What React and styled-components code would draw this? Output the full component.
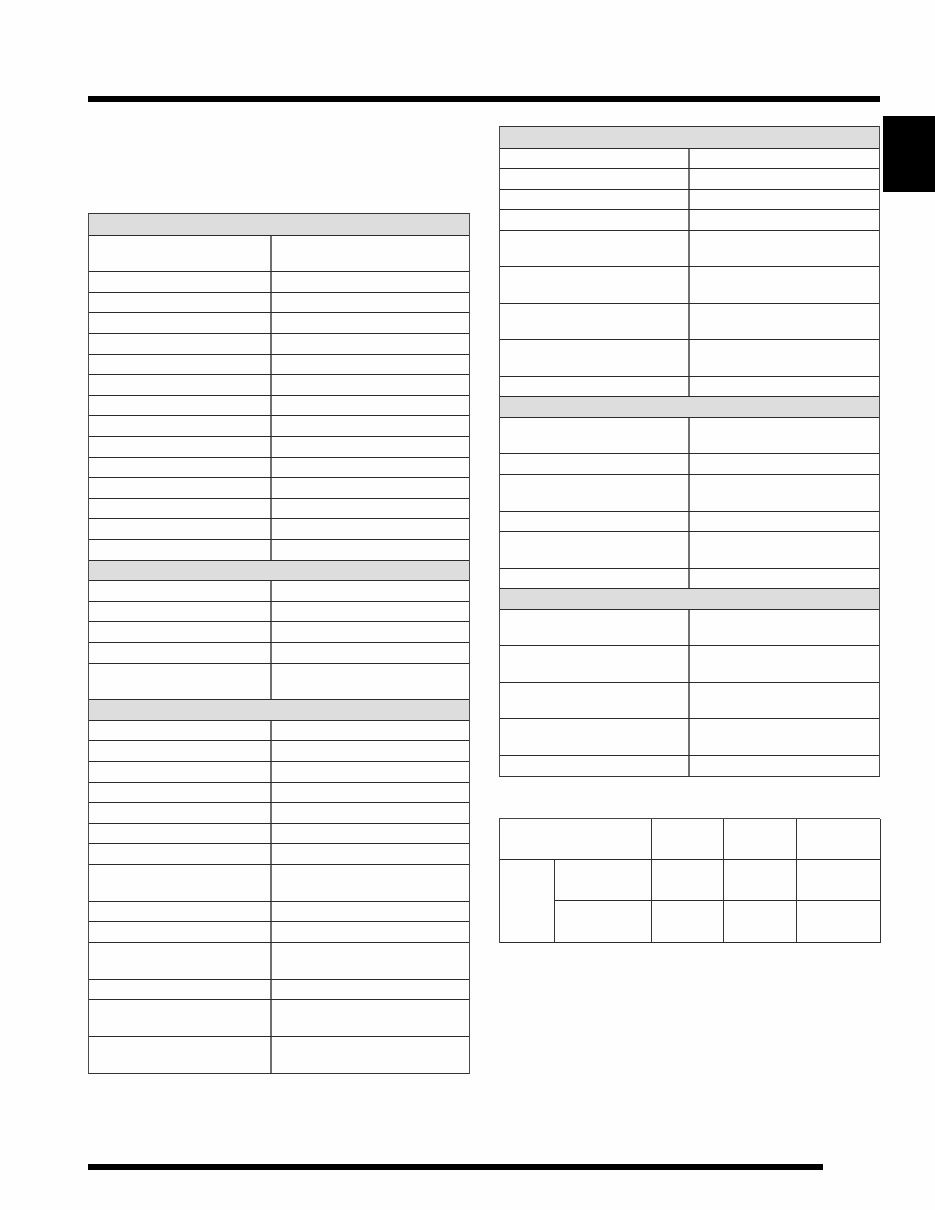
import React from "react";
import styled, { createGlobalStyle } from "styled-components";

const GlobalStyle = createGlobalStyle`
  body {
    margin: 0;
    background: #ffffff;
    font-family: "Liberation Sans", Arial, sans-serif;
  }
  * { box-sizing: border-box; }
`;

const Page = styled.div`
  width: 935px;
  height: 1210px;
  padding: 96px 0 0 88px;
  background: #fefefe;
  overflow: hidden;
`;

const Rule = styled.div`
  width: ${(p) => p.$width}px;
  height: 6px;
  background: #000;
  margin-top: ${(p) => p.$top || 0}px;
`;

const Content = styled.div`
  display: flex;
  align-items: flex-start;
  margin-top: 14px;
`;

const LeftCol = styled.div`
  width: 382px;
  padding-top: 97px;
`;

const RightCol = styled.div`
  width: 381px;
  margin-left: 29px;
  padding-top: 10px;
`;

const Tab = styled.div`
  width: 52px;
  height: 76px;
  margin-left: 3px;
  background: #000;
`;

const Table = styled.div`
  border-left: 1.5px solid #4a4a4a;
  border-right: 1.5px solid #4a4a4a;
  border-top: 1.5px solid #333;
  border-bottom: 1.5px solid #333;
`;

const Row = styled.div`
  display: grid;
  grid-template-columns: ${(p) => p.$split}px 1fr;
  height: ${(p) => (p.$tall ? p.$dh : p.$sh)}px;
  border-top: 1.5px solid #2a2a2a;
  &:first-child {
    border-top: none;
  }
`;

const HeadRow = styled.div`
  height: ${(p) => p.$sh}px;
  background: #dddddd;
  border-top: 1.5px solid #2a2a2a;
  &:first-child {
    border-top: none;
  }
`;

const Cell = styled.div`
  & + & {
    border-left: 2px solid #707070;
  }
`;

const Grid = styled.div`
  display: grid;
  grid-template-columns: 55px 97px 72px 73px 84px;
  grid-template-rows: 41px 41px 42px;
  margin-top: 41px;
  border-top: 1.5px solid #444;
  border-left: 1.5px solid #444;
`;

const GridCell = styled.div`
  border-right: 1.5px solid #333;
  border-bottom: 1.5px solid #2a2a2a;
  grid-column: ${(p) => p.$col || "auto"};
  grid-row: ${(p) => p.$row || "auto"};
`;

const s = (n) => Array(n).fill("s");

const leftSections = [
  ["d", ...s(14)],
  [...s(4), "d"],
  [...s(7), "d", "s", "s", "d", "s", "d", "d"],
];

const rightSections = [
  ["s", "s", "s", "s", "d", "d", "d", "d", "s"],
  ["d", "s", "d", "s", "d", "s"],
  ["d", "d", "d", "d", "s"],
];

const SpecTable = ({ sections, split, sh, dh }) => (
  <Table>
    {sections.flatMap((rows, i) => [
      <HeadRow key={`h${i}`} $sh={sh} />,
      ...rows.map((r, j) => (
        <Row
          key={`r${i}-${j}`}
          $split={split}
          $tall={r === "d"}
          $sh={sh}
          $dh={dh}
        >
          <Cell />
          <Cell />
        </Row>
      )),
    ])}
  </Table>
);

const App = () => {
  return (
    <>
      <GlobalStyle />
      <Page>
        <Rule $width={792} />
        <Content>
          <LeftCol>
            <SpecTable sections={leftSections} split={181} sh={20.6} dh={36.7} />
          </LeftCol>
          <RightCol>
            <SpecTable sections={rightSections} split={188} sh={20.5} dh={36.6} />
            <Grid>
              <GridCell $col="1 / 3" />
              <GridCell />
              <GridCell />
              <GridCell />
              <GridCell $row="2 / 4" />
              <GridCell />
              <GridCell />
              <GridCell />
              <GridCell />
              <GridCell />
              <GridCell />
              <GridCell />
              <GridCell />
            </Grid>
          </RightCol>
          <Tab />
        </Content>
        <Rule $width={735} $top={90} />
      </Page>
    </>
  );
};

export default App;
